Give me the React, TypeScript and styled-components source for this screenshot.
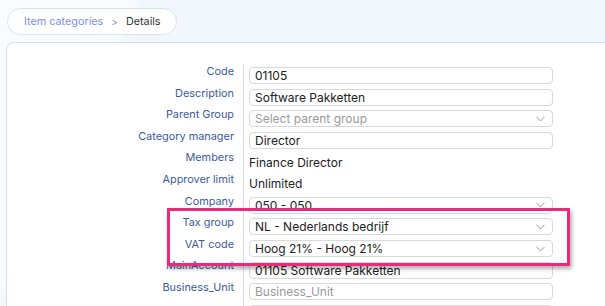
import React from "react";
import styled, { createGlobalStyle } from "styled-components";

const GlobalStyle = createGlobalStyle`
  html, body {
    margin: 0;
    padding: 0;
    background: #f3f8fd;
    font-family: Inter, "Liberation Sans", sans-serif;
    overflow: hidden;
  }
`;

const Page = styled.div`
  width: 605px;
  height: 306px;
  display: flex;
  flex-direction: column;
  gap: 7px;
  padding: 8px 0 0 6px;
  box-sizing: border-box;
  overflow: hidden;
  background: linear-gradient(115deg, #f9fbfe 0%, #f9fbfe 18%, #f2f7fd 19%, #f2f7fd 100%);
`;

const Crumbs = styled.div`
  flex-shrink: 0;
  align-self: flex-start;
  display: flex;
  align-items: center;
  gap: 8px;
  height: 27px;
  box-sizing: border-box;
  margin-left: 1px;
  padding: 0 15px 0 16px;
  border: 1px solid #d3e6f8;
  border-radius: 14px;
  background: #fff;
  font-size: 10.8px;
`;

const Crumb = styled.span<{ $current?: boolean }>`
  color: ${(p) => (p.$current ? "#333" : "#7e92e4")};
`;

const Sep = styled.span`
  color: #7e92e4;
  font-size: 10px;
`;

const Panel = styled.div`
  flex: 1 0 auto;
  background: #fff;
  border: 1px solid #cfe3f6;
  border-right: none;
  border-bottom: none;
  border-radius: 8px 0 0 0;
  padding-top: 22px;
`;

const Form = styled.div`
  position: relative;
  display: grid;
  grid-template-columns: 236px 311px;
  grid-auto-rows: 21.6px;
`;

const Label = styled.div`
  text-align: right;
  padding: 0 9px 0 0;
  margin-top: -1px;
  font-size: 10.9px;
  line-height: 15px;
  color: #3d5b9f;
  white-space: nowrap;
`;

const Cell = styled.div`
  border-left: 1px solid #dcdcdc;
  padding-left: 5px;
  display: flex;
  align-items: center;
`;

const Input = styled.div<{ $placeholder?: boolean }>`
  width: 304px;
  height: 17px;
  box-sizing: border-box;
  border: 1px solid #d9d9d9;
  border-radius: 4px;
  display: flex;
  align-items: center;
  justify-content: space-between;
  padding: 0 7px 0 5px;
  font-size: 12px;
  color: ${(p) => (p.$placeholder ? "#9a9a9a" : "#222")};
  white-space: nowrap;
  overflow: hidden;
`;

const Plain = styled.span`
  font-size: 12px;
  color: #222;
`;

const Highlight = styled.div`
  position: absolute;
  left: 160px;
  top: 143px;
  width: 403px;
  height: 58px;
  box-sizing: border-box;
  border: 3px solid #ea2a7b;
  box-shadow: 2px 3px 4px rgba(0, 0, 0, 0.3);
  pointer-events: none;
`;

const Chevron = () => (
  <svg width="9" height="6" viewBox="0 0 9 6">
    <polyline points="0.5,0.8 4.5,5 8.5,0.8" fill="none" stroke="#9a9a9a" strokeWidth="1" />
  </svg>
);

type Row = {
  label: string;
  value: string;
  kind: "input" | "select" | "text";
  placeholder?: boolean;
};

const rows: Row[] = [
  { label: "Code", value: "01105", kind: "input" },
  { label: "Description", value: "Software Pakketten", kind: "input" },
  { label: "Parent Group", value: "Select parent group", kind: "select", placeholder: true },
  { label: "Category manager", value: "Director", kind: "input" },
  { label: "Members", value: "Finance Director", kind: "text" },
  { label: "Approver limit", value: "Unlimited", kind: "text" },
  { label: "Company", value: "050 - 050", kind: "select" },
  { label: "Tax group", value: "NL - Nederlands bedrijf", kind: "select" },
  { label: "VAT code", value: "Hoog 21% - Hoog 21%", kind: "select" },
  { label: "MainAccount", value: "01105 Software Pakketten", kind: "input" },
  { label: "Business_Unit", value: "Business_Unit", kind: "input", placeholder: true },
  { label: "", value: "", kind: "input" },
];

export default function App() {
  return (
    <Page>
      <GlobalStyle />
      <Crumbs>
        <Crumb>Item categories</Crumb>
        <Sep>&gt;</Sep>
        <Crumb $current>Details</Crumb>
      </Crumbs>
      <Panel>
        <Form>
          {rows.map((r, i) => (
            <React.Fragment key={i}>
              <Label>{r.label}</Label>
              <Cell>
                {r.kind === "text" ? (
                  <Plain>{r.value}</Plain>
                ) : (
                  <Input $placeholder={r.placeholder}>
                    <span>{r.value}</span>
                    {r.kind === "select" && <Chevron />}
                  </Input>
                )}
              </Cell>
            </React.Fragment>
          ))}
          <Highlight />
        </Form>
      </Panel>
    </Page>
  );
}
